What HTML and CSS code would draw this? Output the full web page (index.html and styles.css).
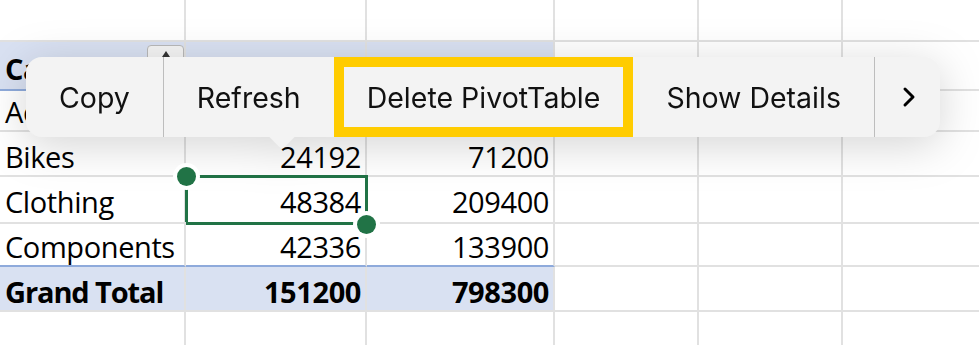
FILE: index.html
```html
<!DOCTYPE html>
<html lang="en">
<head>
  <meta charset="UTF-8">
  <title>PivotTable context menu</title>
  <link rel="stylesheet" href="styles.css">
</head>
<body>

  <!-- Worksheet -->
  <div class="sheet">
    <div class="row row-top">
      <div class="cell"></div><div class="cell"></div><div class="cell"></div>
      <div class="cell"></div><div class="cell"></div><div class="cell"></div>
    </div>

    <div class="row row-head">
      <div class="cell pivot bold">
        <span>Category</span>
        <span class="filter-btn"><span class="filter-arrow"></span></span>
      </div>
      <div class="cell pivot bold">Sum of Qty</div>
      <div class="cell pivot bold">Sum of Sales</div>
      <div class="cell"></div><div class="cell"></div><div class="cell"></div>
    </div>

    <div class="row">
      <div class="cell">Accessories</div>
      <div class="cell num">36288</div>
      <div class="cell num">383800</div>
      <div class="cell"></div><div class="cell"></div><div class="cell"></div>
    </div>

    <div class="row">
      <div class="cell">Bikes</div>
      <div class="cell num">24192</div>
      <div class="cell num">71200</div>
      <div class="cell"></div><div class="cell"></div><div class="cell"></div>
    </div>

    <div class="row">
      <div class="cell">Clothing</div>
      <div class="cell num selected">
        48384
        <span class="handle handle-tl"></span>
        <span class="handle handle-br"></span>
      </div>
      <div class="cell num">209400</div>
      <div class="cell"></div><div class="cell"></div><div class="cell"></div>
    </div>

    <div class="row row-last">
      <div class="cell">Components</div>
      <div class="cell num">42336</div>
      <div class="cell num">133900</div>
      <div class="cell"></div><div class="cell"></div><div class="cell"></div>
    </div>

    <div class="row row-total">
      <div class="cell pivot bold label">Grand Total</div>
      <div class="cell pivot bold num">151200</div>
      <div class="cell pivot bold num">798300</div>
      <div class="cell"></div><div class="cell"></div><div class="cell"></div>
    </div>

    <div class="row">
      <div class="cell"></div><div class="cell"></div><div class="cell"></div>
      <div class="cell"></div><div class="cell"></div><div class="cell"></div>
    </div>
  </div>

  <!-- Context menu -->
  <div class="menu">
    <div class="menu-item">Copy</div>
    <div class="menu-item">Refresh</div>
    <div class="menu-item active">Delete PivotTable</div>
    <div class="menu-item">Show Details</div>
    <div class="menu-item more">
      <svg width="14" height="22" viewBox="0 0 14 22">
        <polyline points="3,3 11,11 3,19" fill="none" stroke="#000" stroke-width="3" stroke-linecap="round" stroke-linejoin="round"/>
      </svg>
    </div>
    <span class="menu-tail"></span>
  </div>

</body>
</html>
```

FILE: styles.css
```css
body {
  margin: 0;
  background: #fff;
  font-family: "Open Sans", "Liberation Sans", sans-serif;
  overflow: hidden;
  width: 979px;
  height: 345px;
  position: relative;
}

/* Worksheet grid */
.sheet {
  display: flex;
  flex-direction: column;
}

.row {
  display: grid;
  grid-template-columns: 186px 181px 188px 144px 144px 144px;
  height: 45px;
}

.row-top {
  height: 42px;
}

.cell {
  box-sizing: border-box;
  border-right: 2px solid #e1e1e1;
  border-bottom: 2px solid #e1e1e1;
  padding: 5px 4px 0 5px;
  font-size: 29px;
  line-height: 40px;
  letter-spacing: -0.4px;
  color: #000;
  white-space: nowrap;
  overflow: hidden;
  position: relative;
}

.num {
  text-align: right;
}

.bold {
  font-weight: bold;
}

.bold.label {
  letter-spacing: -1.1px;
}

.pivot {
  background: #d9e1f2;
}

.row-head .cell {
  padding-top: 7px;
}

.row-head .pivot,
.row-last .cell:nth-child(-n+3) {
  border-bottom-color: #8eaadb;
}

.row-head .cell:first-child {
  display: flex;
  overflow: visible;
}

.filter-btn {
  margin: -4px -4px 0 auto;
  width: 37px;
  height: 32px;
  box-sizing: border-box;
  border: 1px solid #b9b9b9;
  border-radius: 4px;
  background: #f4f4f4;
  display: flex;
  justify-content: center;
  padding-top: 5px;
}

.filter-arrow {
  width: 0;
  height: 0;
  border-left: 4px solid transparent;
  border-right: 4px solid transparent;
  border-bottom: 6px solid #333;
}

/* Selected cell */
.selected {
  overflow: visible;
}

.selected::after {
  content: "";
  position: absolute;
  left: -1px;
  top: -2px;
  right: -3px;
  bottom: -3px;
  border: 3px solid #217346;
}

.handle {
  position: absolute;
  width: 19px;
  height: 19px;
  border-radius: 50%;
  background: #217346;
  box-shadow: 0 0 0 4px #fff;
  z-index: 1;
}

.handle-tl {
  left: -9px;
  top: -10px;
}

.handle-br {
  right: -11px;
  bottom: -12px;
}

/* Context menu */
.menu {
  position: absolute;
  left: 26px;
  top: 57px;
  width: 914px;
  height: 80px;
  display: flex;
  background: #f3f3f3;
  border-radius: 16px;
  filter: drop-shadow(0 8px 22px rgba(0, 0, 0, 0.17));
  font-family: "Inter", "Noto Sans", sans-serif;
  font-size: 28.5px;
  color: #111;
}

.menu-item {
  display: flex;
  align-items: center;
  justify-content: center;
  padding: 0 33px;
  box-sizing: border-box;
  position: relative;
  z-index: 1;
}

.menu-item + .menu-item {
  border-left: 1px solid #bdbdbd;
}

.menu-item.active {
  box-shadow: inset 0 0 0 10px #ffcc00;
  border-left: none;
}

.menu-item.active + .menu-item {
  border-left: none;
}

.menu-item.more {
  flex: 1;
  padding: 0 0 0 3px;
}

.menu-tail {
  position: absolute;
  left: 245px;
  top: 66px;
  width: 22px;
  height: 22px;
  background: #f3f3f3;
  border-radius: 4px;
  transform: rotate(45deg);
}
```
